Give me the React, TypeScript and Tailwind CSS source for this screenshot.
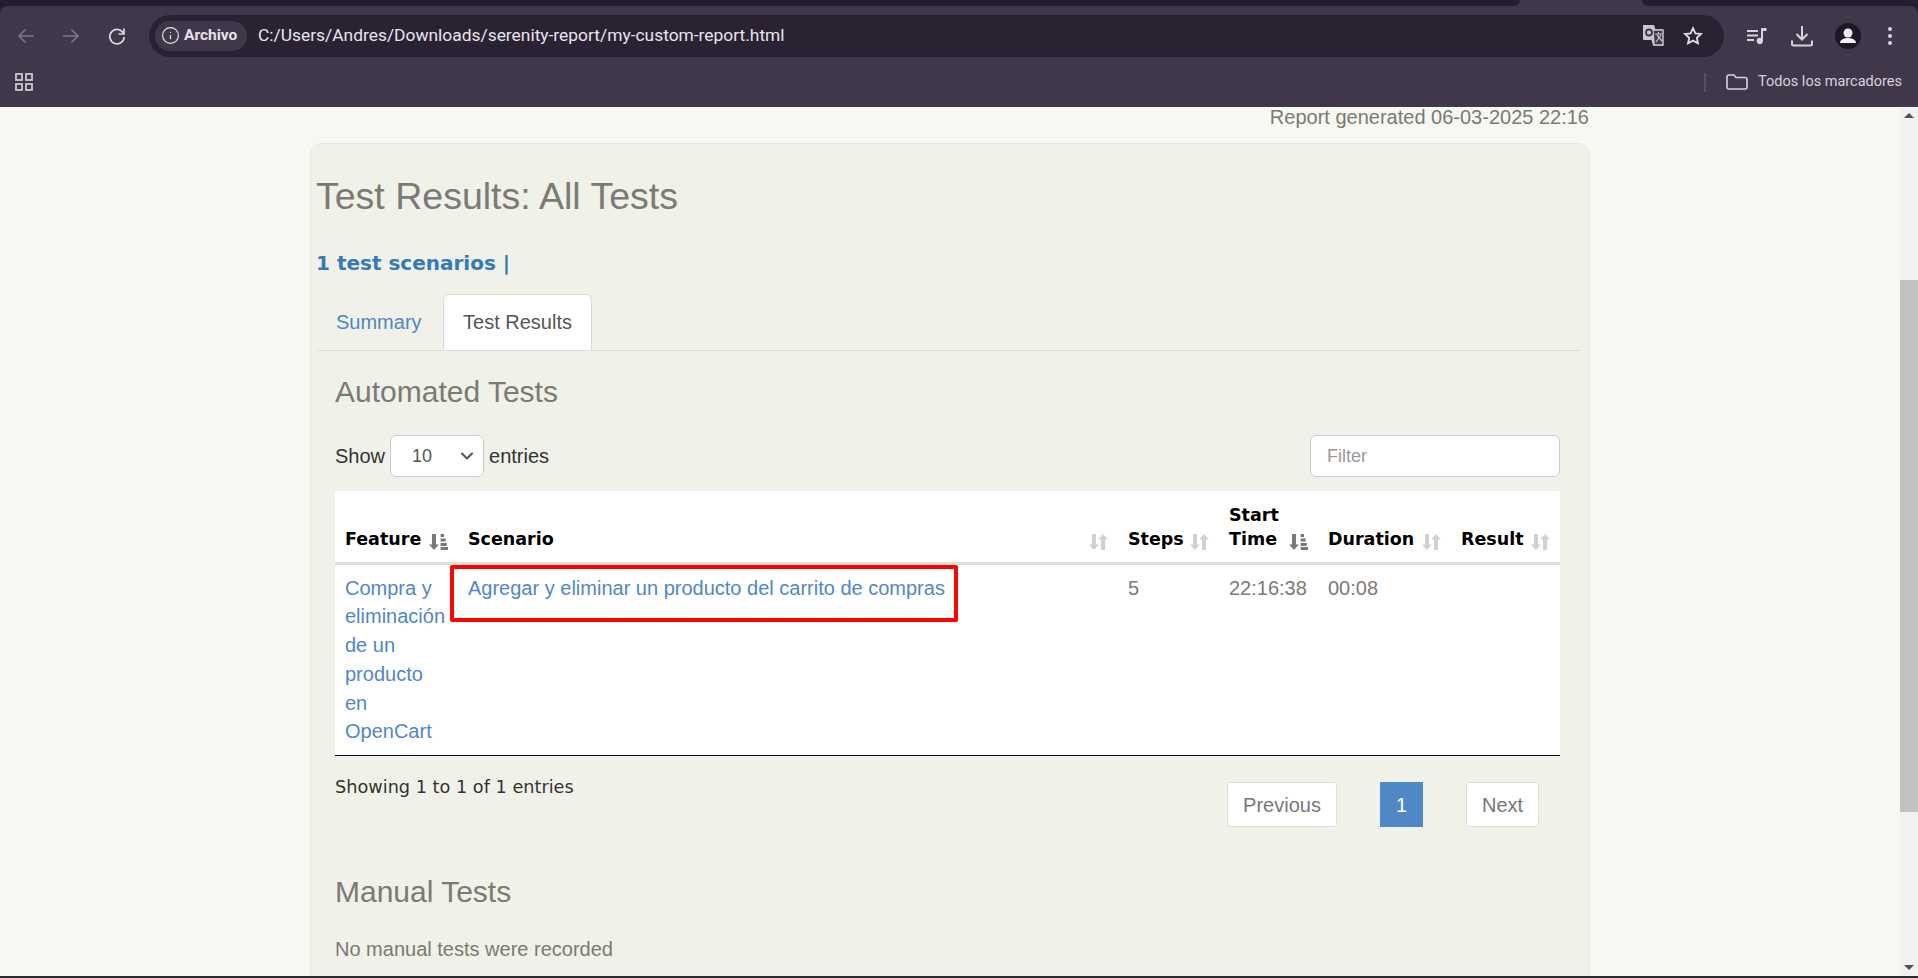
import { Info, ChevronDown } from 'lucide-react'

const SortIdle = () => (
  <svg width="19" height="18" viewBox="0 0 18 18" preserveAspectRatio="none" className="shrink-0 text-[#d0d0d0]" fill="currentColor">
    <path d="M2.800 1h3.800v10.500h2.800L4.700 17 0 11.500h2.800z" />
    <path d="M11.400 17h3.800V6.500H18L13.300 1 8.600 6.500h2.800z" />
  </svg>
)

const SortActive = () => (
  <svg width="19" height="18" viewBox="0 0 18 18" preserveAspectRatio="none" className="shrink-0 text-[#787878]" fill="currentColor">
    <path d="M2.800 1h3.800v10.500h2.800L4.700 17 0 11.500h2.800z" />
    <path d="M11 1h3.200v3H11zM11 5.500h4.800v3H11zM11 10h5.800v3H11zM11 14h7v3h-7z" />
  </svg>
)

const columns = [
  { label: 'Feature', width: 'w-[123px]', active: true },
  { label: 'Scenario', width: 'w-[660px]', active: false },
  { label: 'Steps', width: 'w-[101px]', active: false },
  { label: 'Start Time', width: 'w-[99px]', active: true },
  { label: 'Duration', width: 'w-[133px]', active: false },
  { label: 'Result', width: 'w-[109px]', active: false },
]

const BrowserChrome = () => (
  <div className="h-[107px] shrink-0 bg-[#241e2e]">
    <div className="flex h-[6px] bg-[#40384a]">
      <div className="h-[6px] w-[1520px] rounded-br-lg bg-[#241e2e]" />
      <div className="ml-[122px] h-[6px] flex-1 rounded-bl-lg bg-[#241e2e]" />
    </div>
    <div className="h-[101px] rounded-t-lg bg-[#40384a]">
      <div className="flex h-[58px] items-center pl-[14px] pt-[1px]">
        <svg width="24" height="24" viewBox="0 0 24 24" className="text-[#7d7685]" fill="none" stroke="currentColor" strokeWidth="1.600">
          <path d="M20 12H5M11.500 5.500 5 12l6.500 6.500" />
        </svg>
        <svg width="24" height="24" viewBox="0 0 24 24" className="ml-[21px] text-[#7d7685]" fill="none" stroke="currentColor" strokeWidth="1.600">
          <path d="M4 12h15M12.500 5.500 19 12l-6.500 6.500" />
        </svg>
        <svg width="24" height="24" viewBox="0 0 24 24" className="ml-[22px] text-[#dcd8e0]" fill="none" stroke="currentColor" strokeWidth="1.700">
          <path d="M18.500 9.500A7.200 7.200 0 1 0 19.200 13" />
          <path d="M19 4.500V10h-5.500" />
        </svg>
        <div className="ml-[20px] flex h-[42px] w-[1575px] shrink-0 items-center rounded-full bg-[#2a2233] pl-[6px] pr-[20px]">
          <div className="flex h-[30px] w-[92px] shrink-0 items-center gap-[4px] rounded-full bg-[#40384a] pl-[6px] text-[15.500px] font-bold text-[#e6e2ea] [font-family:'Roboto',sans-serif]">
            <Info size={19} strokeWidth={1.500} />
            <span>Archivo</span>
          </div>
          <span className="ml-[11px] flex-1 text-[17.400px] text-[#e8e4ec] [font-family:'Roboto',sans-serif]">
            C:/Users/Andres/Downloads/serenity-report/my-custom-report.html
          </span>
          <svg width="23" height="23" viewBox="0 0 23 23" className="shrink-0">
            <path d="M1 1h11l1.500 4.500H20a2 2 0 0 1 1 1v15H11L9.500 16H2a1 1 0 0 1-1-1z" fill="#c9c5cd" />
            <path d="M11 6h10v15H12z" fill="#40384a" stroke="#c9c5cd" strokeWidth="1.500" />
            <circle cx="7" cy="8.500" r="3" fill="none" stroke="#40384a" strokeWidth="1.800" />
            <path d="M13 10h7M16.500 8v2M14 18l5-7M15 11l5 6" stroke="#c9c5cd" strokeWidth="1.200" fill="none" />
          </svg>
          <svg width="22" height="22" viewBox="0 0 24 24" className="ml-[17px] shrink-0 text-[#e0dce4]" fill="none" stroke="currentColor" strokeWidth="2">
            <path d="m12 3.500 2.600 5.600 6.100.7-4.500 4.200 1.200 6-5.400-3-5.400 3 1.200-6-4.500-4.200 6.100-.7z" />
          </svg>
        </div>
        <svg width="20" height="18" viewBox="0 0 20 18" className="ml-[23px] shrink-0 text-[#d8d2de]" fill="currentColor">
          <path d="M0 3h11v2H0zM0 7.500h11v2H0zM0 12h7v2H0z" />
          <path d="M14 1h5.500v3H16v10a3.200 3.200 0 1 1-2-3z" />
        </svg>
        <svg width="22" height="22" viewBox="0 0 22 22" className="ml-[24px] shrink-0 text-[#d8d2de]" fill="none" stroke="currentColor" strokeWidth="2">
          <path d="M11 1v13M5.500 9l5.500 5.500L16.500 9M1 15.500V19a1.500 1.500 0 0 0 1.500 1.500h17A1.500 1.500 0 0 0 21 19v-3.500" />
        </svg>
        <svg width="26" height="26" viewBox="0 0 26 26" className="ml-[22px] shrink-0">
          <circle cx="13" cy="13" r="13" fill="#1c1626" />
          <circle cx="13" cy="10" r="4.500" fill="#f2eff5" />
          <path d="M5 20c0-3.500 4-5 8-5s8 1.500 8 5z" fill="#f2eff5" />
        </svg>
        <svg width="6" height="20" viewBox="0 0 6 20" className="ml-[26px] shrink-0 text-[#d8d2de]" fill="currentColor">
          <circle cx="3" cy="3" r="2" />
          <circle cx="3" cy="10" r="2" />
          <circle cx="3" cy="17" r="2" />
        </svg>
      </div>
      <div className="flex h-[36px] items-center pl-[15px] pr-[16px]">
        <svg width="18" height="18" viewBox="0 0 18 18" className="text-[#c9c5cd]" fill="none" stroke="currentColor" strokeWidth="1.800">
          <rect x="1" y="1" width="6" height="6" />
          <rect x="11" y="1" width="6" height="6" />
          <rect x="1" y="11" width="6" height="6" />
          <rect x="11" y="11" width="6" height="6" />
        </svg>
        <div className="ml-auto h-[19px] w-[2px] bg-[#57505f]" />
        <svg width="22" height="16" viewBox="0 0 22 16" className="ml-[20px] text-[#d8d2de]" fill="none" stroke="currentColor" strokeWidth="1.600">
          <path d="M1 3a2 2 0 0 1 2-2h5l2 2.500h9a2 2 0 0 1 2 2V13a2 2 0 0 1-2 2H3a2 2 0 0 1-2-2z" />
        </svg>
        <span className="ml-[10px] text-[14.500px] text-[#d8d2de] [font-family:'Roboto',sans-serif]">Todos los marcadores</span>
      </div>
    </div>
  </div>
)

const Scrollbar = () => (
  <div className="flex w-[18px] shrink-0 flex-col bg-[#f1f1f1]">
    <div className="flex h-[17px] items-center justify-center">
      <div className="h-0 w-0 border-x-[5px] border-b-[5px] border-x-transparent border-b-[#505050]" />
    </div>
    <div className="mt-[156px] h-[532px] bg-[#c1c1c1]" />
    <div className="mt-auto flex h-[17px] items-center justify-center">
      <div className="h-0 w-0 border-x-[5px] border-t-[5px] border-x-transparent border-t-[#505050]" />
    </div>
  </div>
)

const TestsTable = () => (
  <table className="mt-[14px] w-[1225px] table-fixed border-collapse bg-white">
    <thead>
      <tr className="h-[72px] border-b-[3px] border-[#dddddd]">
        {columns.map((c) => (
          <th key={c.label} className={`${c.width} px-[10px] pb-[10px] align-bottom`}>
            <div className="flex items-end justify-between text-left text-[17.500px] font-bold leading-[24.500px] text-black [font-family:'DejaVu_Sans',sans-serif]">
              <span>{c.label}</span>
              <span className="pb-[1px]">{c.active ? <SortActive /> : <SortIdle />}</span>
            </div>
          </th>
        ))}
      </tr>
    </thead>
    <tbody>
      <tr className="border-b border-[#111111] align-top text-[20px] leading-[28.800px] text-[#7b7a74]">
        <td className="px-[10px] py-[9px] text-[#5087c7]">Compra y eliminación de un producto en OpenCart</td>
        <td className="px-[10px] py-[9px] text-[#5087c7]">Agregar y eliminar un producto del carrito de compras</td>
        <td className="px-[10px] py-[9px]">5</td>
        <td className="px-[10px] py-[9px]">22:16:38</td>
        <td className="px-[10px] py-[9px]">00:08</td>
        <td className="px-[10px] py-[9px]" />
      </tr>
    </tbody>
  </table>
)

const Panel = () => (
  <section className="relative ml-[310px] w-[1280px] rounded-t-xl border border-[#e6e7dd] bg-[#f0f1e8] pb-[60px] pl-[5px]">
    <h1 className="mt-[28px] text-[37.500px] leading-[48px] text-[#7b7a74]">Test Results: All Tests</h1>
    <p className="mt-[31px] text-[20px] font-bold leading-[24px] text-[#337ab7] [font-family:'DejaVu_Sans',sans-serif]">1 test scenarios |</p>
    <nav className="mt-[19px] ml-[1px] flex h-[57px] w-[1263px] border-b border-[#dcdcd4]">
      <span className="flex w-[126px] items-center pb-[1px] pl-[19px] text-[20px] text-[#5087c7]">Summary</span>
      <span className="flex w-[149px] items-center justify-center rounded-t-md border border-b-0 border-[#dcdcd4] bg-white pb-[1px] text-[20px] text-[#555555]">Test Results</span>
    </nav>
    <div className="pl-[19px]">
      <h2 className="mt-[23px] text-[30px] leading-[36px] text-[#7b7a74]">Automated Tests</h2>
      <div className="mt-[25px] flex h-[42px] w-[1225px] items-center text-[20px] text-[#333333]">
        <span>Show</span>
        <div className="ml-[5px] flex h-[42px] w-[94px] items-center justify-between rounded-md border border-[#cccccc] bg-white pl-[21px] pr-[6px] text-[18px] text-[#555555]">
          <span>10</span>
          <ChevronDown size={20} strokeWidth={2.500} />
        </div>
        <span className="ml-[5px]">entries</span>
        <div className="ml-auto flex h-[42px] w-[250px] items-center rounded-md border border-[#cccccc] bg-white pl-[16px] text-[18px] text-[#999999]">Filter</div>
      </div>
      <TestsTable />
      <div className="flex w-[1225px] items-start">
        <p className="mt-[19px] text-[17.700px] leading-[24px] text-[#333333] [font-family:'DejaVu_Sans',sans-serif]">Showing 1 to 1 of 1 entries</p>
        <div className="ml-auto mr-[21px] mt-[26px] flex items-center text-[20px] text-[#777777]">
          <span className="flex h-[45px] w-[110px] items-center justify-center rounded-[3px] border border-[#dddddd] bg-white">Previous</span>
          <span className="ml-[43px] flex h-[45px] w-[43px] items-center justify-center bg-[#5087c7] text-white">1</span>
          <span className="ml-[43px] flex h-[45px] w-[73px] items-center justify-center rounded-[3px] border border-[#dddddd] bg-white">Next</span>
        </div>
      </div>
      <h2 className="mt-[47px] text-[30px] leading-[36px] text-[#7b7a74]">Manual Tests</h2>
      <p className="mt-[25px] text-[20px] leading-[28px] text-[#7b7a74]">No manual tests were recorded</p>
    </div>
    {/* annotation drawn over the screenshot */}
    <div className="absolute left-[139px] top-[421px] h-[57px] w-[508px] rounded-[2px] border-[4px] border-[#ff0000]" />
  </section>
)

const App = () => (
  <div className="flex h-[978px] w-[1918px] flex-col overflow-hidden bg-[#f7f8f2] [font-family:'Liberation_Sans',sans-serif]">
    <BrowserChrome />
    <div className="flex min-h-0 flex-1">
      <main className="min-w-0 flex-1 overflow-hidden">
        <p className="h-[36px] pr-[311px] text-right text-[20px] leading-[20px] text-[#7b7a74]">Report generated 06-03-2025 22:16</p>
        <Panel />
      </main>
      <Scrollbar />
    </div>
    <div className="h-[2px] shrink-0 bg-[#2a2d30]" />
  </div>
)

export default App
